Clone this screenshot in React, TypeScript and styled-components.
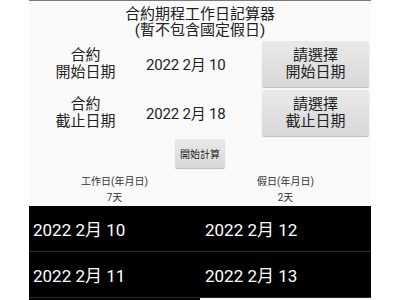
import * as React from "react";
import styled, { createGlobalStyle } from "styled-components";

const FONT = `Roboto, "Noto Sans CJK TC", "Noto Sans", sans-serif`;

const GlobalStyle = createGlobalStyle`
  html, body {
    margin: 0;
    padding: 0;
    background: #ffffff;
  }
  body {
    font-family: ${FONT};
  }
`;

const workDays = [
  "2022 2月 10",
  "2022 2月 11",
  "2022 2月 14",
  "2022 2月 15",
  "2022 2月 16",
  "2022 2月 17",
  "2022 2月 18",
];
const holidays = ["2022 2月 12", "2022 2月 13"];

type DateRowProps = {
  label: string;
  value: string;
  action: string;
};

function DateRow(props: DateRowProps) {
  return (
    <Row>
      <Label>
        合約
        <br />
        {props.label}
      </Label>
      <DateText>{props.value}</DateText>
      <PickButton>
        請選擇
        <br />
        {props.action}
      </PickButton>
    </Row>
  );
}

export default function App() {
  return (
    <>
      <GlobalStyle />
      <Screen>
        <Title>
          合約期程工作日記算器
          <br />
          (暫不包含國定假日)
        </Title>
        <DateRow label="開始日期" value="2022 2月 10" action="開始日期" />
        <DateRow label="截止日期" value="2022 2月 18" action="截止日期" />
        <CalcWrap>
          <CalcButton>開始計算</CalcButton>
        </CalcWrap>
        <Columns>
          <Column>
            <Head>
              工作日(年月日)
              <br />
              {workDays.length}天
            </Head>
            <List>
              {workDays.map((d) => (
                <Item key={d}>{d}</Item>
              ))}
            </List>
          </Column>
          <Column>
            <Head>
              假日(年月日)
              <br />
              {holidays.length}天
            </Head>
            <List>
              {holidays.map((d) => (
                <Item key={d} $right>
                  {d}
                </Item>
              ))}
            </List>
          </Column>
        </Columns>
      </Screen>
    </>
  );
}

const Screen = styled.div`
  box-sizing: border-box;
  width: 342px;
  height: 300px;
  margin: 0 auto;
  display: flex;
  flex-direction: column;
  overflow: hidden;
  background: #fafafa;
  border-top: 1px solid #7a7a7a;
  font-family: ${FONT};
  color: #222;
`;

const Title = styled.div`
  text-align: center;
  font-size: 15px;
  line-height: 16px;
  padding: 5px 0 1px;
  height: 32px;
  flex: none;
`;

const Row = styled.div`
  display: grid;
  grid-template-columns: 113px 120px 107px;
  align-items: center;
  height: 49px;
  flex: none;
`;

const Label = styled.div`
  text-align: center;
  font-size: 15px;
  line-height: 17px;
`;

const DateText = styled.div`
  padding-left: 4px;
  font-size: 15px;
  letter-spacing: -0.2px;
`;

const PickButton = styled.button`
  height: 46px;
  width: 107px;
  padding: 0;
  border: none;
  border-radius: 2px;
  background: linear-gradient(#e9e9e9, #d8d8d8);
  box-shadow: 0 1px 1px rgba(0, 0, 0, 0.25);
  font-family: ${FONT};
  font-size: 15px;
  line-height: 17px;
  color: #222;
`;

const CalcWrap = styled.div`
  display: flex;
  justify-content: center;
  padding-top: 2px;
  flex: none;
`;

const CalcButton = styled.button`
  height: 29px;
  width: 50px;
  padding: 0;
  border: none;
  border-radius: 2px;
  background: linear-gradient(#e9e9e9, #d8d8d8);
  box-shadow: 0 1px 1px rgba(0, 0, 0, 0.25);
  font-family: ${FONT};
  font-size: 10px;
  color: #222;
`;

const Columns = styled.div`
  flex: 1;
  min-height: 0;
  display: grid;
  grid-template-columns: 1fr 1fr;
  padding-top: 6px;
`;

const Column = styled.div`
  display: flex;
  flex-direction: column;
  min-height: 0;
`;

const Head = styled.div`
  text-align: center;
  font-size: 10px;
  line-height: 16px;
  color: #333;
  flex: none;
`;

const List = styled.div`
  flex: 0 1 auto;
  min-height: 0;
  overflow: hidden;
  background: #000;
`;

const Item = styled.div<{ $right?: boolean }>`
  height: 45px;
  display: flex;
  align-items: center;
  padding-left: ${(p) => (p.$right ? "5px" : "4px")};
  border-bottom: 1px solid #2c2c2c;
  color: #fff;
  font-size: 17px;
`;
